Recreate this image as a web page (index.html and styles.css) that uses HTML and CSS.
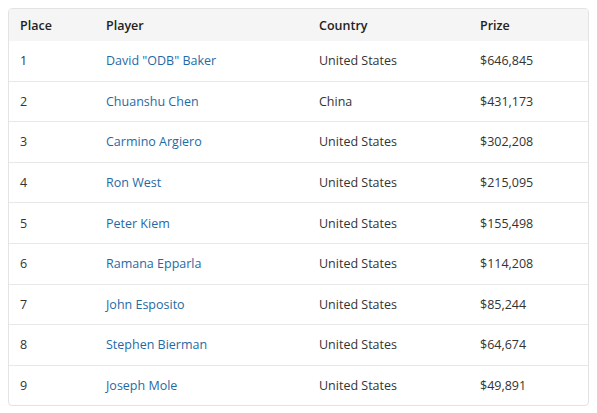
FILE: index.html
```html
<!DOCTYPE html>
<html>
<head>
<meta charset="utf-8">
<link rel="stylesheet" href="styles.css">
</head>
<body>
<div class="wrap">
<table class="results">
<thead>
<tr><th class="c-place">Place</th><th class="c-player">Player</th><th class="c-country">Country</th><th class="c-prize">Prize</th></tr>
</thead>
<tbody>
<tr><td>1</td><td><a href="#">David "ODB" Baker</a></td><td>United States</td><td>$646,845</td></tr>
<tr><td>2</td><td><a href="#">Chuanshu Chen</a></td><td>China</td><td>$431,173</td></tr>
<tr><td>3</td><td><a href="#">Carmino Argiero</a></td><td>United States</td><td>$302,208</td></tr>
<tr><td>4</td><td><a href="#">Ron West</a></td><td>United States</td><td>$215,095</td></tr>
<tr><td>5</td><td><a href="#">Peter Kiem</a></td><td>United States</td><td>$155,498</td></tr>
<tr><td>6</td><td><a href="#">Ramana Epparla</a></td><td>United States</td><td>$114,208</td></tr>
<tr><td>7</td><td><a href="#">John Esposito</a></td><td>United States</td><td>$85,244</td></tr>
<tr><td>8</td><td><a href="#">Stephen Bierman</a></td><td>United States</td><td>$64,674</td></tr>
<tr><td>9</td><td><a href="#">Joseph Mole</a></td><td>United States</td><td>$49,891</td></tr>
</tbody>
</table>
</div>
</body>
</html>
```
FILE: styles.css
```css
html, body { margin: 0; padding: 0; background: #fff; }
body { font-family: "Open Sans", "Noto Sans", sans-serif; font-size: 12.5px; color: #333; }
.wrap {
  margin: 8px;
  width: 581px;
  border: 1px solid #e3e3e3;
  border-radius: 4px;
  overflow: hidden;
  box-sizing: border-box;
}
.results { width: 100%; border-collapse: collapse; table-layout: fixed; }
.results th {
  background: #f5f5f5;
  font-weight: 600;
  text-align: left;
  height: 32px;
  padding: 0 0 0 11px;
  color: #222;
}
.results td {
  height: 39.6px;
  padding: 0 0 0 11px;
  border-top: 1px solid #e8e8e8;
}
.results thead + tbody tr:first-child td { border-top: none; }
.c-place { width: 75px; }
.c-player { width: 202px; }
.c-country { width: 150px; }
.results a { color: #1f6aa5; text-decoration: none; }
```
